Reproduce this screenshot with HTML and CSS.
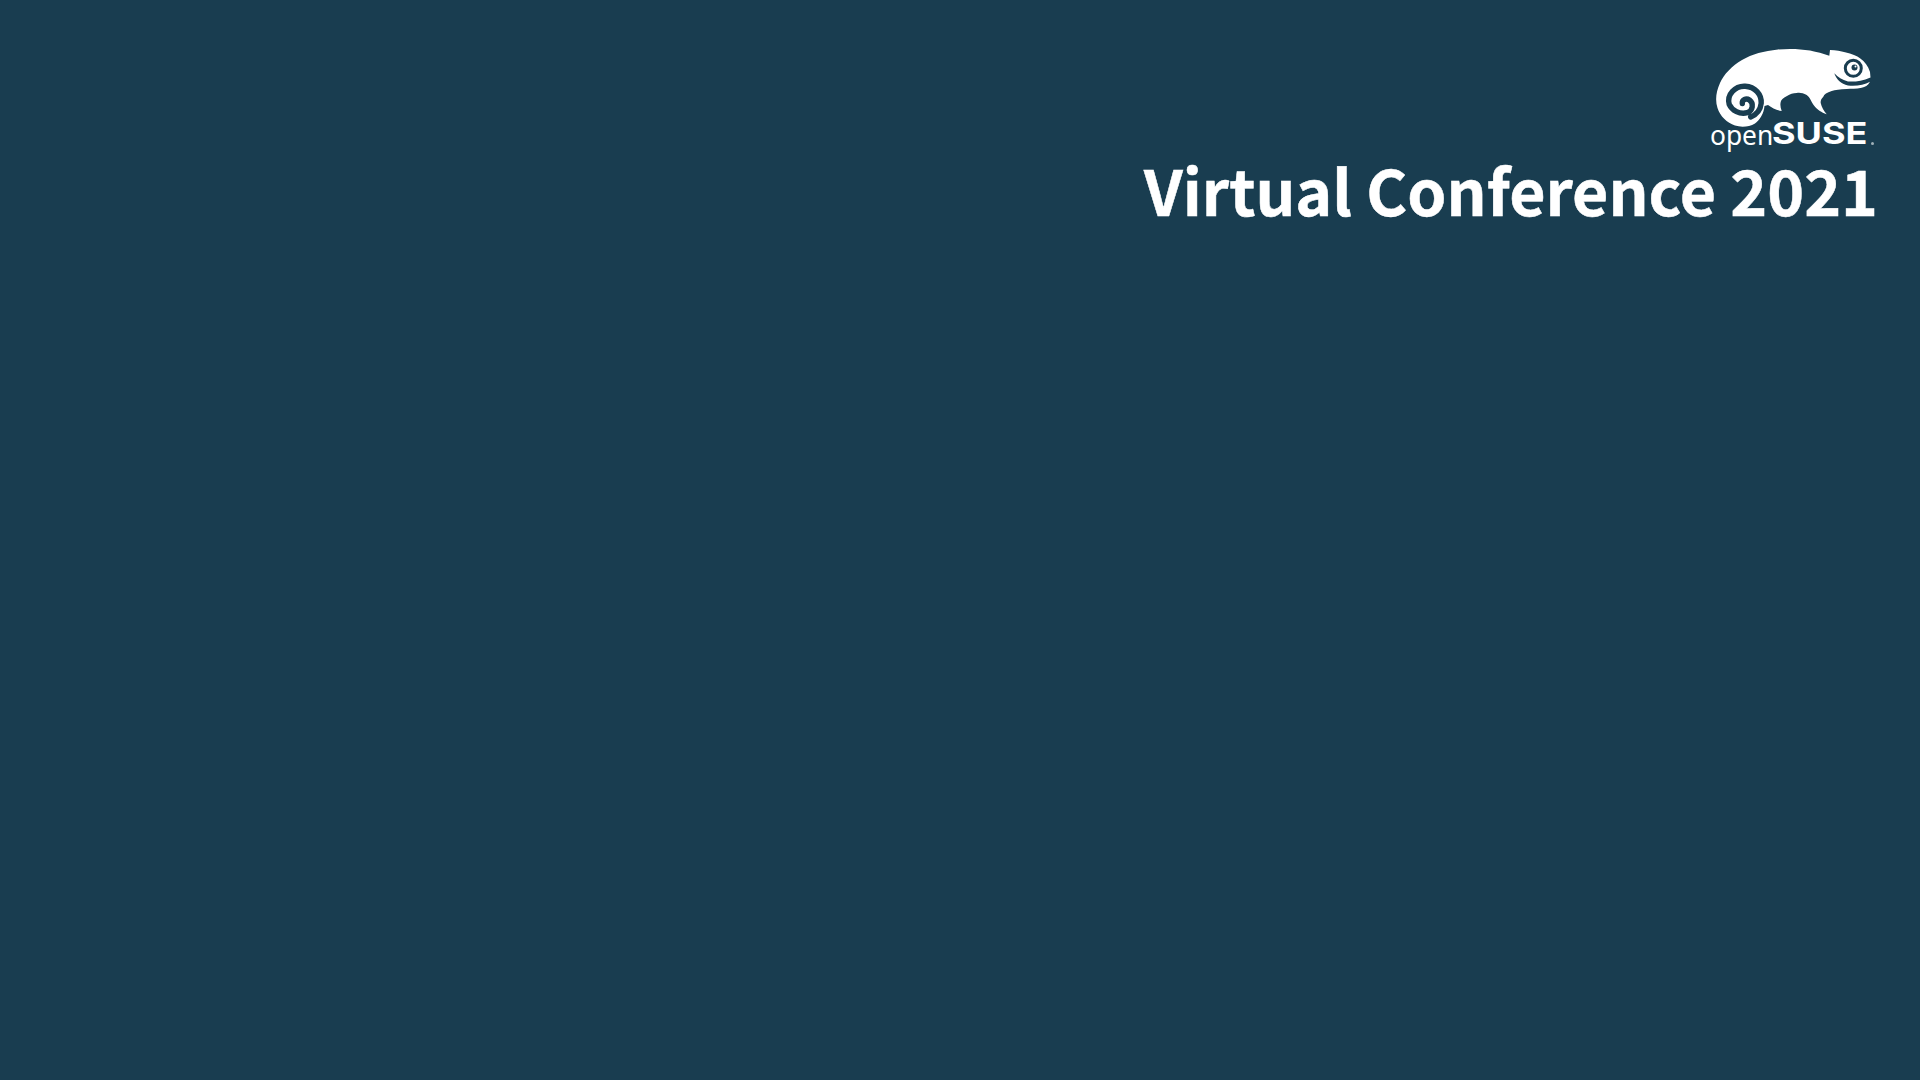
FILE: index.html
```
<!DOCTYPE html>
<html lang="en">
<head>
<meta charset="utf-8">
<title>openSUSE Virtual Conference 2021</title>
<link rel="stylesheet" href="styles.css">
</head>
<body>
<header class="brand">
<div class="logo">
<svg class="mascot" viewBox="1705 45 175 88" role="img" aria-label="openSUSE mascot">
  <path class="ink" d="M1829.3 55.7 L1830 50 C1836 50 1841 51 1845 52.3 C1852 54 1857 56 1860 58.3 C1865 62 1868 66 1870 72 L1870.5 77.5 C1862 81 1855 82 1848 81.5 C1842 80 1838 77 1834.3 73.3 C1836 79 1841 84 1848 85.5 C1856 86.5 1864 85 1870 81.7 C1868 85.5 1865 87 1861.7 87.7 C1856 89 1851 88.5 1846.7 89 C1840 89.5 1835 89.5 1831.7 91 C1827 92.5 1824 94.5 1823.3 96.7 C1821 99 1820.5 101 1820.7 103 C1821.5 107 1824 111 1826.7 114.3 C1821 112 1818 110 1815 106.7 C1811 102 1810 97 1806.7 95 C1803 93 1800 92.5 1796.7 93 C1793 93 1790 94 1787 96 C1783 98 1781 100 1780.7 102 C1780 105 1780.5 108 1781.7 111 C1776 110 1772 108 1768 105 L1764.5 106 C1764 113 1760 120 1755 123.5 C1749 127 1741 127.5 1735 125.5 C1727 123 1720 116 1717.5 108 C1715 100 1716 92 1720 83 C1724 74 1732 66 1742 60 C1752 54 1764 51 1778 49.5 C1790 48.5 1800 49 1810 50.5 C1817 52 1823 53.5 1829.3 55.7 Z"/>
  <path class="cut" d="M1742.3 103.6 C1741.8 99.5 1746.2 97.8 1749.5 100 C1754 103.3 1752.9 111 1747.4 112.7 C1739.7 114.9 1732 110.5 1729.2 104.4 C1726.5 94.5 1735.3 85.7 1745.2 86.3 C1755.1 86.8 1761.7 94.5 1761.2 103.3 C1760.6 108.8 1757.3 114.3 1750.7 117"/>
  <circle class="eye-ring" cx="1853.3" cy="68.3" r="8"/>
  <circle class="pupil" cx="1854.5" cy="67.5" r="3"/>
  <circle class="glint" cx="1855.5" cy="66.5" r="1"/>
</svg>
<div class="wordmark">
  <span class="word-open">open</span>
  <span class="word-suse">SUSE</span>
  <span class="reg"></span>
</div>
</div>
<h1 class="title">Virtual Conference 2021</h1>
</header>
</body>
</html>
```
FILE: styles.css
```
html, body {
  margin: 0;
  height: 100%;
}
body {
  background: #193d50;
  overflow: hidden;
}
.brand {
  display: flex;
  flex-direction: column;
  align-items: flex-end;
  padding: 45px 40px 0 0;
}
.logo {
  width: 175px;
  height: 110px;
}
.mascot {
  display: block;
  width: 175px;
  height: 88px;
}
.ink {
  fill: #fff;
}
.cut {
  fill: none;
  stroke: #193d50;
  stroke-width: 5.4;
  stroke-linecap: round;
}
.eye-ring {
  fill: #fff;
  stroke: #193d50;
  stroke-width: 3;
}
.pupil {
  fill: #193d50;
}
.glint {
  fill: #fff;
}
.wordmark {
  display: flex;
  align-items: baseline;
  height: 22px;
  margin-top: -10px;
  padding-left: 5px;
  color: #fff;
}
.word-open {
  width: 61.5px;
  font-family: "Noto Sans", sans-serif;
  font-weight: 400;
  font-size: 28px;
  line-height: 22px;
  transform: scaleX(0.94);
  transform-origin: left center;
}
.word-suse {
  width: 99.5px;
  font-family: "Inter", sans-serif;
  font-weight: 700;
  font-size: 30px;
  line-height: 22px;
  transform: translateY(-1.5px) scaleX(1.2);
  transform-origin: left center;
}
.reg {
  width: 3px;
  height: 3px;
  border-radius: 50%;
  background: #9fb0b8;
}
.title {
  margin: 2px 2px 0 0;
  color: #fff;
  font-family: "Noto Sans CJK SC", "Noto Sans", sans-serif;
  font-weight: 700;
  font-size: 62.6px;
  line-height: 63px;
  -webkit-text-stroke: 0.5px #fff;
}
```
